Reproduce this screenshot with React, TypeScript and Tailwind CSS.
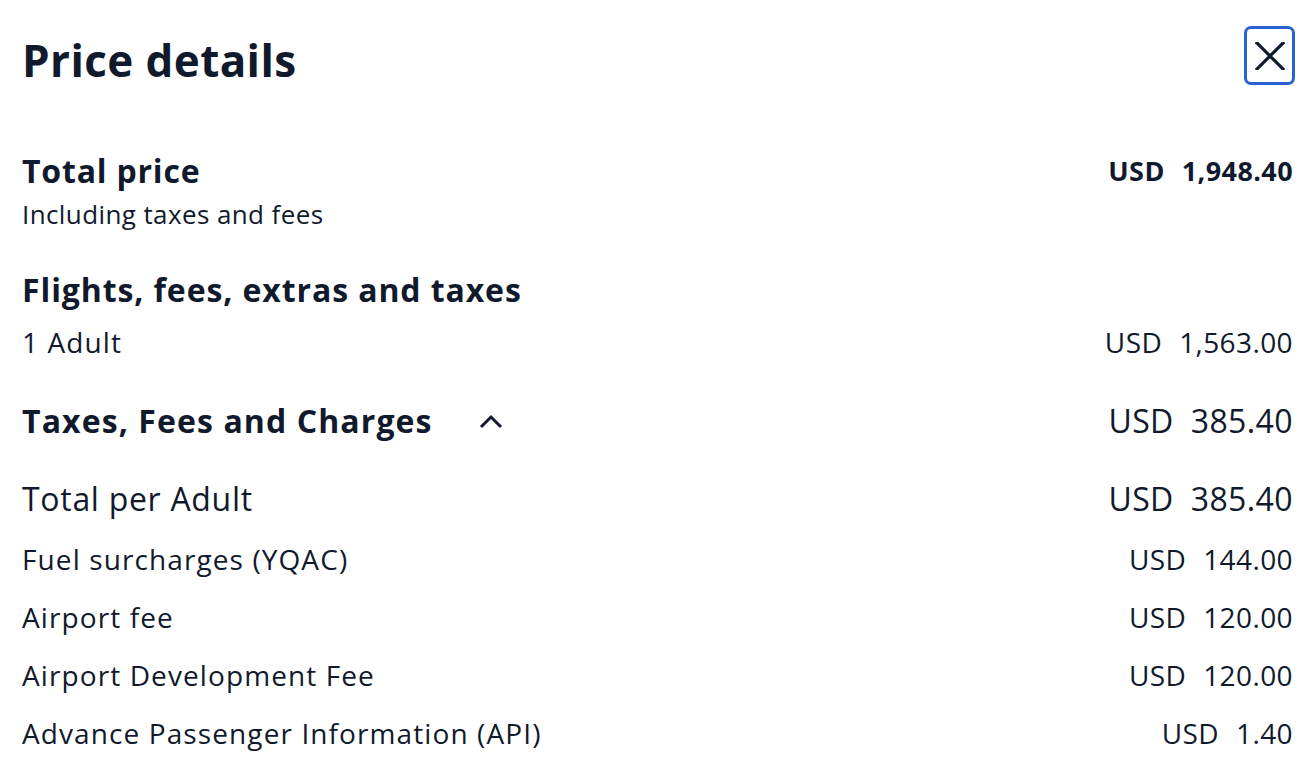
import React from 'react';

const rows = [
  { label: 'Fuel surcharges (YQAC)', amount: '144.00' },
  { label: 'Airport fee', amount: '120.00' },
  { label: 'Airport Development Fee', amount: '120.00' },
  { label: 'Advance Passenger Information (API)', amount: '1.40' },
];

function Amount({ value, className = '' }: { value: string; className?: string }) {
  return (
    <div className={`flex gap-[17px] tracking-[0.4px] ${className}`}>
      <span>USD</span>
      <span>{value}</span>
    </div>
  );
}

export default function App() {
  return (
    <div className="h-[766px] w-full overflow-hidden bg-white pl-[22px] pr-[19px] text-[#111a2d] font-['Open_Sans',sans-serif]">
      {/* Header */}
      <div className="mt-[26px] flex h-[59px] items-center justify-between">
        <h1 className="mt-[9px] text-[44px] font-bold leading-[50px] tracking-[0.4px]">Price details</h1>
        <button className="-mr-[2px] flex h-[59px] w-[51px] items-center justify-center rounded-[7px] border-[3px] border-[#2a62d3]">
          <svg width="30" height="28" viewBox="0 0 30 28" fill="none" stroke="#111a2d" strokeWidth="3.2" strokeLinecap="square">
            <line x1="2" y1="1" x2="28" y2="27" />
            <line x1="28" y1="1" x2="2" y2="27" />
          </svg>
        </button>
      </div>

      {/* Total price */}
      <div className="mt-[66px] flex justify-between">
        <div>
          <div className="text-[32px] font-bold leading-[40px] tracking-[0.8px]">Total price</div>
          <div className="mt-[5px] text-[26px] leading-[36px] tracking-[0.4px]">Including taxes and fees</div>
        </div>
        <Amount value="1,948.40" className="text-[27px] font-bold leading-[40px]" />
      </div>

      {/* Flights */}
      <div className="mt-[38px] text-[32px] font-bold leading-[40px] tracking-[0.9px]">Flights, fees, extras and taxes</div>
      <div className="mt-[14px] flex justify-between text-[28px] leading-[36px]">
        <span className="tracking-[1.1px]">1 Adult</span>
        <Amount value="1,563.00" />
      </div>

      {/* Taxes */}
      <div className="mt-[41px] flex items-center justify-between text-[32px] leading-[40px]">
        <div className="flex items-center gap-[46px]">
          <span className="font-bold tracking-[1.1px]">Taxes, Fees and Charges</span>
          <svg width="24" height="16" viewBox="0 0 24 16" fill="none" stroke="#111a2d" strokeWidth="3">
            <polyline points="2,14 12,4 22,14" />
          </svg>
        </div>
        <Amount value="385.40" />
      </div>

      <div className="mt-[38px] flex justify-between text-[32px] leading-[40px]">
        <span className="tracking-[0.7px]">Total per Adult</span>
        <Amount value="385.40" />
      </div>

      <div className="mt-[1px]">
        {rows.map((r) => (
          <div key={r.label} className="mt-[22px] flex justify-between text-[28px] leading-[36px]">
            <span className="tracking-[1.1px]">{r.label}</span>
            <Amount value={r.amount} />
          </div>
        ))}
      </div>
    </div>
  );
}
